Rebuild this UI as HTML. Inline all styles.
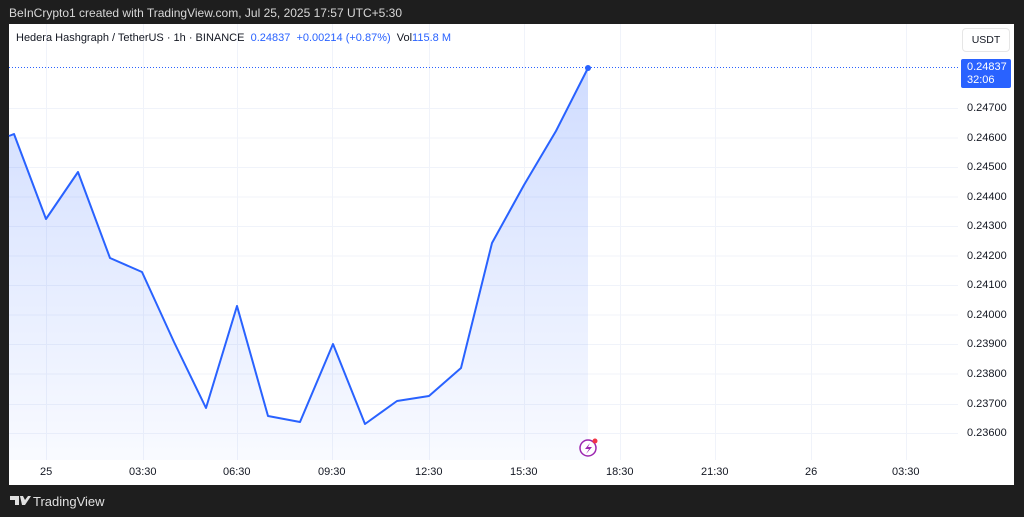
<!DOCTYPE html>
<html><head><meta charset="utf-8"><style>
body{margin:0;width:1024px;height:517px;background:#1e1e1e;position:relative;overflow:hidden;font-family:"Liberation Sans",sans-serif}
.hdr{position:absolute;left:9px;top:6px;color:#d8d8d8;font-size:12px}
.panel{position:absolute;left:9px;top:24px;width:1005px;height:461px;background:#fff}
.title{position:absolute;left:16px;top:32px;font-size:11px;color:#131722}
.title span{color:#2962ff}
.t{position:absolute;font-size:11px;color:#131722}
.usdt{position:absolute;left:962px;top:28px;width:46px;height:22px;border:1px solid #e6e6e6;border-radius:4px;font-size:10.5px;text-align:center;line-height:22px;color:#131722}
.pl{position:absolute;left:961px;top:59px;width:50px;height:29px;background:#2962ff;border-radius:2px;color:#fff;font-size:11px;line-height:12.5px;padding:2px 0 0 6px;box-sizing:border-box}
.logo{position:absolute;left:10px;top:494px;color:#e0e0e0;font-size:13px}
</style></head><body>
<div class="hdr">BeInCrypto1 created with TradingView.com, Jul 25, 2025 17:57 UTC+5:30</div>
<div class="panel"></div>
<svg style="position:absolute;left:0;top:0" width="1024" height="517">
<defs><linearGradient id="g" x1="0" y1="0" x2="0" y2="1"><stop offset="0" stop-color="#2962ff" stop-opacity=".22"/><stop offset="1" stop-color="#2962ff" stop-opacity=".03"/></linearGradient></defs>
<g stroke="#f0f3fa" stroke-width="1">
<line x1="9" x2="958" y1="108.5" y2="108.5"/><line x1="9" x2="958" y1="138" y2="138"/><line x1="9" x2="958" y1="167.5" y2="167.5"/><line x1="9" x2="958" y1="197" y2="197"/><line x1="9" x2="958" y1="226.5" y2="226.5"/><line x1="9" x2="958" y1="256" y2="256"/><line x1="9" x2="958" y1="285.5" y2="285.5"/><line x1="9" x2="958" y1="315" y2="315"/><line x1="9" x2="958" y1="344.5" y2="344.5"/><line x1="9" x2="958" y1="374" y2="374"/><line x1="9" x2="958" y1="404.5" y2="404.5"/><line x1="9" x2="958" y1="433.5" y2="433.5"/>
<line x1="46.5" x2="46.5" y1="24" y2="460"/><line x1="143.5" x2="143.5" y1="24" y2="460"/><line x1="237.5" x2="237.5" y1="24" y2="460"/><line x1="332.5" x2="332.5" y1="24" y2="460"/><line x1="429.5" x2="429.5" y1="24" y2="460"/><line x1="524.5" x2="524.5" y1="24" y2="460"/><line x1="620.5" x2="620.5" y1="24" y2="460"/><line x1="715.5" x2="715.5" y1="24" y2="460"/><line x1="811.5" x2="811.5" y1="24" y2="460"/><line x1="906.5" x2="906.5" y1="24" y2="460"/>
</g>
<line x1="9" x2="960" y1="67.5" y2="67.5" stroke="#2962ff" stroke-width="1" stroke-dasharray="1,2"/>
<path d="M9,136 L14,134 L46,219 L78,172 L110,258 L142,272 L174,342 L206,408 L237,306 L268,416 L300,422 L333,344 L365,424 L397,401 L429,396 L461,368 L492,243 L524,185 L556,131 L588,68 L588,460 L9,460Z" fill="url(#g)"/>
<path d="M9,136 L14,134 L46,219 L78,172 L110,258 L142,272 L174,342 L206,408 L237,306 L268,416 L300,422 L333,344 L365,424 L397,401 L429,396 L461,368 L492,243 L524,185 L556,131 L588,68" fill="none" stroke="#2962ff" stroke-width="2" stroke-linejoin="round"/>
<circle cx="588" cy="68" r="3" fill="#2962ff"/>
<circle cx="588" cy="448" r="8" fill="#fff" stroke="#9c27b0" stroke-width="1.5"/>
<path d="M590,443 L585,449 L589,449 L586,454 L592,447 L588,447Z" fill="#9c27b0"/>
<circle cx="595" cy="441" r="2.5" fill="#f23645"/>
<path d="M10,496 h9 v9 h-4 v-5 h-5z M20,496 h3 l2,4 l3,-4 h3 l-6,9 h-3z" fill="#e0e0e0"/>
</svg>
<div class="title">Hedera Hashgraph / TetherUS · 1h · BINANCE &nbsp;<span>0.24837 &nbsp;+0.00214 (+0.87%)</span> &nbsp;Vol<span>115.8 M</span></div>
<div class="usdt">USDT</div>
<div class="pl">0.24837<br>32:06</div>
<div class="t" style="left:967px;top:102px">0.24700</div>
<div class="t" style="left:967px;top:132px">0.24600</div>
<div class="t" style="left:967px;top:161px">0.24500</div>
<div class="t" style="left:967px;top:191px">0.24400</div>
<div class="t" style="left:967px;top:220px">0.24300</div>
<div class="t" style="left:967px;top:250px">0.24200</div>
<div class="t" style="left:967px;top:279px">0.24100</div>
<div class="t" style="left:967px;top:309px">0.24000</div>
<div class="t" style="left:967px;top:338px">0.23900</div>
<div class="t" style="left:967px;top:368px">0.23800</div>
<div class="t" style="left:967px;top:398px">0.23700</div>
<div class="t" style="left:967px;top:427px">0.23600</div>
<div class="t" style="left:40px;top:466px">25</div>
<div class="t" style="left:129px;top:466px">03:30</div>
<div class="t" style="left:223px;top:466px">06:30</div>
<div class="t" style="left:318px;top:466px">09:30</div>
<div class="t" style="left:415px;top:466px">12:30</div>
<div class="t" style="left:510px;top:466px">15:30</div>
<div class="t" style="left:606px;top:466px">18:30</div>
<div class="t" style="left:701px;top:466px">21:30</div>
<div class="t" style="left:805px;top:466px">26</div>
<div class="t" style="left:892px;top:466px">03:30</div>
<div class="logo" style="left:33px">TradingView</div>
</body></html>
